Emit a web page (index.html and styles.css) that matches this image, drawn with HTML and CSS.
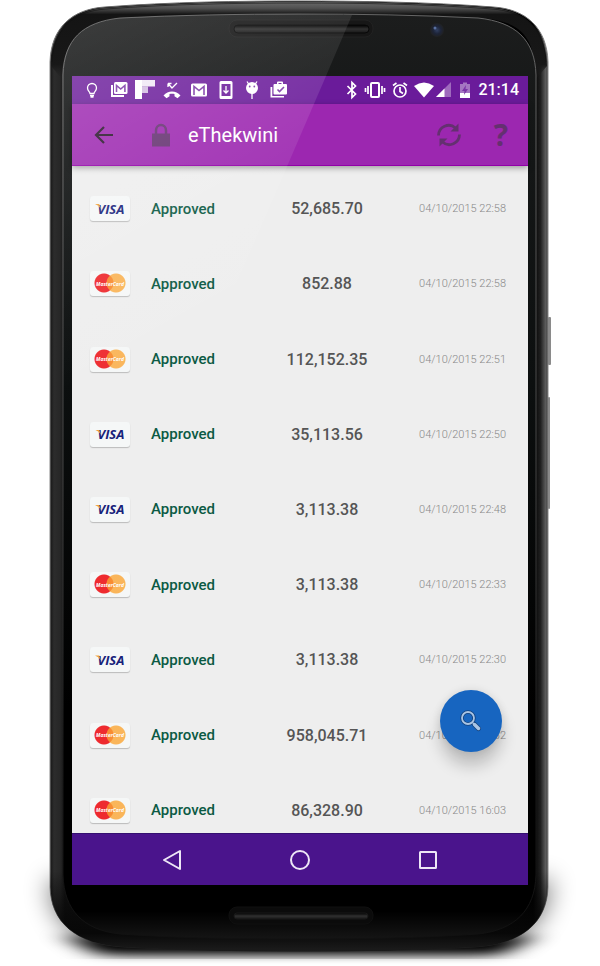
FILE: index.html
```html
<!DOCTYPE html>
<html lang="en">
<head>
<meta charset="utf-8">
<meta name="viewport" content="width=device-width, initial-scale=1">
<title>eThekwini</title>
<link rel="stylesheet" href="styles.css">
</head>
<body>
<main class="stage">
  <svg class="frame" viewBox="0 0 600 966" preserveAspectRatio="none" aria-hidden="true">
    <defs>
      <linearGradient id="rim" x1="0" x2="1" y1="0" y2="0">
        <stop offset="0" stop-color="#151515"/><stop offset=".008" stop-color="#2c2c2c"/><stop offset=".02" stop-color="#272727"/>
        <stop offset=".03" stop-color="#151515"/><stop offset=".97" stop-color="#000"/><stop offset=".985" stop-color="#202020"/><stop offset=".995" stop-color="#5a5a5a"/><stop offset="1" stop-color="#444"/>
      </linearGradient>
      <linearGradient id="shade" x1="0" x2="0" y1="0" y2="1">
        <stop offset="0" stop-color="#000" stop-opacity="0"/><stop offset=".91" stop-color="#000" stop-opacity="0"/><stop offset=".98" stop-color="#080808"/><stop offset="1" stop-color="#1c1c1c"/>
      </linearGradient>
      <linearGradient id="top" x1="0" x2="0" y1="0" y2="1">
        <stop offset="0" stop-color="#6a6a6a"/><stop offset=".08" stop-color="#505050"/><stop offset=".16" stop-color="#141414"/><stop offset=".8" stop-color="#181818"/><stop offset="1" stop-color="#222" stop-opacity="0"/>
      </linearGradient>
      <linearGradient id="glass" x1="0" x2="0" y1="0" y2="1">
        <stop offset="0" stop-color="#1c1d1d"/><stop offset=".1" stop-color="#161818"/><stop offset=".4" stop-color="#0c0f0f"/><stop offset=".75" stop-color="#000"/><stop offset=".97" stop-color="#000"/><stop offset="1" stop-color="#151515"/>
      </linearGradient>
      <linearGradient id="edge" x1="0" x2="0" y1="0" y2="1">
        <stop offset="0" stop-color="#666"/><stop offset=".06" stop-color="#888"/><stop offset=".93" stop-color="#888"/><stop offset=".98" stop-color="#444"/><stop offset="1" stop-color="#181818"/>
      </linearGradient>
      <linearGradient id="line" x1="0" x2="0" y1="0" y2="1">
        <stop offset="0" stop-color="#666"/><stop offset=".5" stop-color="#444"/><stop offset=".8" stop-color="#1a1a1a"/><stop offset="1" stop-color="#111"/>
      </linearGradient>
      <linearGradient id="slot" x1="0" x2="0" y1="0" y2="1">
        <stop offset="0" stop-color="#000"/><stop offset=".5" stop-color="#303030"/><stop offset="1" stop-color="#181818"/>
      </linearGradient>
      <radialGradient id="lens"><stop offset="0" stop-color="#314062"/><stop offset=".55" stop-color="#1d2438"/><stop offset="1" stop-color="#202122"/></radialGradient>
      <filter id="blur" x="-20%" y="-100%" width="140%" height="300%"><feGaussianBlur stdDeviation="14 5"/></filter>
      <filter id="haze" x="-20%" y="-50%" width="140%" height="200%"><feGaussianBlur stdDeviation="12"/></filter>
      <clipPath id="ground"><rect width="600" height="959"/></clipPath>
      <linearGradient id="gloss" gradientUnits="userSpaceOnUse" x1="50" y1="0" x2="200" y2="330">
        <stop offset="0" stop-color="#fff" stop-opacity=".2"/><stop offset="1" stop-color="#fff" stop-opacity="0"/>
      </linearGradient>
    </defs>
    <path d="M48 880C50 940 100 951 140 953H460C500 951 548 940 552 880z" fill="#000" opacity=".5" filter="url(#haze)" clip-path="url(#ground)"/>
    <path d="M66 936H534L500 954H100z" fill="#000" filter="url(#blur)"/>
    <rect x="548" y="317" width="3" height="48" rx="1" fill="#8a8a8a"/>
    <rect x="548" y="397" width="2" height="112" rx="1" fill="#8a8a8a"/>
    <path id="body" d="M50 62C51 28 72 9 105 7C170 2 240 1 299 1S428 2 493 7C526 9 547 28 548 62V887C547 921 524 944 474 947C420 950 360 951 299 951S178 950 124 947C74 944 51 921 50 887z" fill="url(#rim)" stroke="url(#edge)"/>
    <path d="M50 62V887C51 921 74 944 124 947C178 950 240 951 299 951S420 950 474 947C524 944 547 921 548 887V62z" fill="url(#shade)"/>
    <path d="M51 66C52 29 73 10 106 8C170 3 240 2 299 2S428 3 492 8C525 10 546 29 547 66L535 80C536 40 524 20 478 18C420 15 360 14 299 14S178 15 120 18C75 20 64 42 63 80z" fill="url(#top)"/>
    <path d="M52 62C53 29 74 11 106 9C170 4 240 3 299 3S428 4 492 9C524 11 545 29 546 62" fill="none" stroke="#111" opacity=".6"/>
    <path d="M63 75C64 40 82 22 120 18C178 15 240 14 299 14S420 15 478 18C516 22 535 40 536 75V875C535 910 515 930 478 934C420 938 360 939 299 939S178 938 120 934C83 930 64 910 63 875z" fill="url(#glass)" stroke="url(#line)"/>
    <g stroke="#222">
      <rect x="229" y="20" width="144" height="17" rx="8" fill="#171717"/>
      <rect x="234" y="25" width="135" height="8" rx="4" fill="url(#slot)" stroke="#080808"/>
      <rect x="229" y="907" width="144" height="17" rx="8" fill="#0b0b0b" stroke="#101010"/>
      <rect x="234" y="913" width="134" height="6" rx="3" fill="url(#slot)" stroke="#181818"/>
    </g>
    <circle cx="437" cy="30" r="7" fill="url(#lens)"/>
    <circle cx="435" cy="28" r="1.500" fill="#5970a0"/>
    <path d="M62 75C64 40 82 22 120 18C178 15 240 14 299 14L352 15L326 76H72V600H63z" fill="url(#gloss)" opacity=".75"/>
  </svg>

  <div class="screen">
    <div class="status">
      <div class="notices">
        <svg viewBox="0 0 20 20"><path d="M8 13.500c0-1.500-2.500-2.500-2.500-5.500a4.500 4.500 0 0 1 9 0c0 3-2.500 4-2.500 5.500z" class="ln"/><path d="M8 15.500h4M8.500 17h3" class="ln"/></svg>
        <svg viewBox="0 0 20 20"><path d="M2 5v12h13v-2H4V5z"/><rect x="5" y="2" width="13.500" height="12" rx="1.500"/><path d="M7.500 12V5.500l4.200 3.500 4.200-3.500V12" class="cut"/></svg>
        <svg viewBox="0 0 20 20"><path d="M0 0h7v19H0z"/><path d="M7 0h13v6.500H7z" opacity=".9"/><path d="M7 6.500h6V13H7z" opacity=".7"/></svg>
        <svg viewBox="0 0 20 20"><path d="M1.500 15.500c4.500-5.500 12.500-5.500 17 0l-3 2.800-3-2v-2.200c-2-.5-3-.5-5 0v2.200l-3 2z"/><path d="M6 3.500V7M6 3.500h3.500M6 3.500L10 8l5-5" class="ln"/></svg>
        <svg viewBox="0 0 20 20"><rect x="2" y="3.500" width="16" height="13" rx="1.500"/><path d="M5 15V6.500l5 4 5-4V15" class="cut"/></svg>
        <svg viewBox="0 0 20 20"><path fill-rule="evenodd" d="M5 1h10q1.500 0 1.500 1.500v15q0 1.500-1.500 1.500H5q-1.500 0-1.500-1.500v-15Q3.500 1 5 1zm.5 3v12h9V4z"/><path d="M10 6v7M7.500 10.500L10 13l2.500-2.500" class="ln"/></svg>
        <svg viewBox="0 0 20 20"><circle cx="10" cy="8" r="6"/><path d="M5 1.500l2 3M15 1.500l-2 3M10 12v7" class="ln"/><circle cx="7.700" cy="6.500" r=".9" class="hole"/><circle cx="12.300" cy="6.500" r=".9" class="hole"/></svg>
        <svg viewBox="0 0 20 20"><path d="M1.500 7v10.500H15V16H3.300V7z"/><path fill-rule="evenodd" d="M4.500 5q0-1 1-1H8V2.500Q8 1.500 9 1.500h4q1 0 1 1V4h3q1 0 1 1v8.500q0 1-1 1H5.500q-1 0-1-1zM9.500 3v1h3V3z"/><path d="M8.500 9.500l2 2L15 7" class="cut"/></svg>
      </div>
      <div class="system">
        <svg class="w12" viewBox="0 0 12 20"><path d="M1.500 6l8 8-3.500 3.500v-15L9.500 6l-8 8" class="ln bold"/></svg>
        <svg class="w22" viewBox="0 0 22 20"><rect x="7" y="3" width="8" height="14" rx="1" class="ln heavy"/><path d="M4 6v8M1.500 8v4M18 6v8M20.500 8v4" class="ln bold"/></svg>
        <svg class="w16" viewBox="0 0 16 20"><circle cx="8" cy="11" r="6" class="ln bold"/><path d="M8 7v4.500l3 2M1 5.500L4.500 3M15 5.500L11.500 3" class="ln bold"/></svg>
        <svg class="w38" viewBox="0 0 38 20"><path d="M0 6q10-7 20 0L10 17.500z"/><path d="M37 2v15H22z" opacity=".35"/><path d="M30.500 8.500V17H22z"/></svg>
        <svg class="w14" viewBox="0 0 14 20"><path d="M2 4h3V2.500h4V4h3v14H2z" opacity=".4"/><path d="M2 13h10v5H2z"/><path d="M8 5l-4 6h2.500L6 15l4-6H7.500z" class="hole"/></svg>
        <time>21:14</time>
      </div>
    </div>

    <header class="appbar">
      <button class="tool" aria-label="Back"><svg viewBox="0 0 24 24"><path d="M21 12H4.500M12 4l-8 8 8 8" fill="none" stroke="#271429" stroke-width="2.200"/></svg></button>
      <svg class="lock" viewBox="0 0 24 24"><path d="M7 12V7.500a5 5.500 0 0 1 10 0V12" fill="none" stroke="#643070" stroke-width="2.500"/><rect x="3" y="10.500" width="18" height="13" fill="#643070"/></svg>
      <h1>eThekwini</h1>
      <button class="tool refresh" aria-label="Refresh"><svg viewBox="0 0 24 24"><path d="M1.500 12.500A10.200 10.200 0 0 1 18.500 5M22.500 11.500A10.200 10.200 0 0 1 5.500 19" fill="none" stroke="#643070" stroke-width="2.800"/><path d="M21.500.5v8h-8zM2.500 23.500v-8h8z" fill="#643070"/></svg></button>
      <button class="tool help" aria-label="Help">?</button>
    </header>

    <section class="list">
      <table>
        <tbody>
          <tr><td class="card"><span class="badge visa">VISA</span></td><td class="state">Approved</td><td class="sum">52,685.70</td><td class="date">04/10/2015 22:58</td></tr>
          <tr><td class="card"><span class="badge mc">MasterCard</span></td><td class="state">Approved</td><td class="sum">852.88</td><td class="date">04/10/2015 22:58</td></tr>
          <tr><td class="card"><span class="badge mc">MasterCard</span></td><td class="state">Approved</td><td class="sum">112,152.35</td><td class="date">04/10/2015 22:51</td></tr>
          <tr><td class="card"><span class="badge visa">VISA</span></td><td class="state">Approved</td><td class="sum">35,113.56</td><td class="date">04/10/2015 22:50</td></tr>
          <tr><td class="card"><span class="badge visa">VISA</span></td><td class="state">Approved</td><td class="sum">3,113.38</td><td class="date">04/10/2015 22:48</td></tr>
          <tr><td class="card"><span class="badge mc">MasterCard</span></td><td class="state">Approved</td><td class="sum">3,113.38</td><td class="date">04/10/2015 22:33</td></tr>
          <tr><td class="card"><span class="badge visa">VISA</span></td><td class="state">Approved</td><td class="sum">3,113.38</td><td class="date">04/10/2015 22:30</td></tr>
          <tr><td class="card"><span class="badge mc">MasterCard</span></td><td class="state">Approved</td><td class="sum">958,045.71</td><td class="date">04/10/2015 16:32</td></tr>
          <tr><td class="card"><span class="badge mc">MasterCard</span></td><td class="state">Approved</td><td class="sum">86,328.90</td><td class="date">04/10/2015 16:03</td></tr>
        </tbody>
      </table>
    </section>

    <nav class="nav">
      <button aria-label="Back"><svg viewBox="0 0 24 24"><path d="M20 3v18L4 12z"/></svg></button>
      <button aria-label="Home"><svg viewBox="0 0 24 24"><circle cx="12" cy="12" r="9"/></svg></button>
      <button aria-label="Recent apps"><svg viewBox="0 0 24 24"><rect x="4" y="4" width="16" height="16" rx=".5"/></svg></button>
    </nav>

    <button class="fab" aria-label="Search"><svg viewBox="0 0 24 24"><path d="M13 13l3 3" stroke="#0c4384" stroke-width="3"/><circle cx="9" cy="9" r="6" fill="none" stroke="#12417c" stroke-width="3.500"/><circle cx="9" cy="9" r="6" fill="none" stroke="#a9c4e4" stroke-width="1.800"/><path d="M15.500 15.500l4 4" stroke="#12417c" stroke-width="5" stroke-linecap="round"/><path d="M13 13l2 2" stroke="#a9c4e4" stroke-width="1.500"/><path d="M15.500 15.500l4 4" stroke="#a9c4e4" stroke-width="3.500" stroke-linecap="round"/></svg></button>

    <svg class="sheen" viewBox="0 0 456 810" preserveAspectRatio="none" aria-hidden="true"><path d="M0 0H254L0 590z" fill="url(#sheen)"/><defs><linearGradient id="sheen" gradientUnits="userSpaceOnUse" x1="0" y1="0" x2="150" y2="270"><stop offset="0" stop-color="#fff" stop-opacity=".19"/><stop offset="1" stop-color="#fff" stop-opacity="0"/></linearGradient></defs></svg>
  </div>
</main>
</body>
</html>
```
FILE: styles.css
```css
* { box-sizing: border-box; }

body {
  margin: 0;
  background: #fff;
  font-family: Roboto, "Liberation Sans", sans-serif;
}

button {
  padding: 0;
  border: 0;
  background: none;
  cursor: pointer;
}

svg { display: block; }

.stage {
  position: relative;
  padding: 76px 12% 81px;
}

.frame {
  position: absolute;
  inset: 0;
  width: 100%;
  height: 100%;
}

.screen {
  position: relative;
  background: #eee;
}

.status {
  display: flex;
  align-items: center;
  justify-content: space-between;
  height: 28px;
  padding: 0 9px 0 10px;
  background: #6a1b9a;
  color: #fff;
}

.notices {
  display: flex;
  justify-content: space-between;
  width: 207px;
}

.system {
  display: flex;
  align-items: center;
  gap: 6px;
}

.status svg {
  width: 20px;
  height: 20px;
  fill: #fff;
}

.status .w12 { width: 12px; }
.status .w14 { width: 14px; }
.status .w16 { width: 16px; }
.status .w22 { width: 22px; }
.status .w38 { width: 38px; }

.status .ln {
  fill: none;
  stroke: #fff;
  stroke-width: 1.3;
}

.status .bold { stroke-width: 1.7; }
.status .heavy { stroke-width: 2; }

.status .cut {
  fill: none;
  stroke: #7a35a6;
  stroke-width: 1.6;
}

.status .hole { fill: #7a35a6; }

time {
  font-size: 16px;
  font-weight: 500;
  line-height: 20px;
}

.appbar {
  position: relative;
  display: flex;
  align-items: center;
  height: 62px;
  padding: 0 15px 0 20px;
  background: #9c27b0;
  border-bottom: 1px solid #9200a8;
  box-shadow: 0 2px 6px rgba(0, 0, 0, .35);
}

.tool {
  width: 24px;
  height: 24px;
}

.lock {
  width: 24px;
  height: 24px;
  margin-left: 33px;
}

.appbar h1 {
  flex: 1;
  margin: 0 0 0 15px;
  color: #fff;
  font-size: 20px;
  font-weight: 400;
  line-height: 24px;
}

.refresh { margin-right: 28px; }

.help {
  color: #643070;
  font: 700 30px/24px "Open Sans", sans-serif;
}

.list {
  height: 667px;
  padding-top: 5px;
  overflow: hidden;
}

table {
  width: 100%;
  height: 677px;
  table-layout: fixed;
  border-collapse: collapse;
}

td { padding: 0; }

.card {
  width: 79px;
  padding-left: 18px;
}

.badge {
  display: flex;
  align-items: center;
  justify-content: center;
  position: relative;
  width: 40px;
  height: 25px;
  border-radius: 3px;
  background: #f5f7f7;
  box-shadow: 0 1px 1px #bbb;
  white-space: nowrap;
}

.visa {
  padding-left: 2px;
  color: #17227a;
  font: italic 700 13px/24px "Open Sans", sans-serif;
}

/* Orange wing on the V */
.visa::before {
  content: "";
  position: absolute;
  left: 5px;
  top: 8px;
  width: 6px;
  height: 5px;
  background: #f2a33a;
  clip-path: polygon(0 0, 70% 0, 100% 100%, 60% 40%);
}

.mc {
  background:
    radial-gradient(circle at 26px 12px, #fba533cc 9px, transparent 10px),
    radial-gradient(circle at 14px 12px, #ee2b2f 9px, transparent 10px),
    #f5f7f7;
  color: #fff;
  font: italic 700 5px/24px "Open Sans", sans-serif;
}

.state {
  width: 100px;
  color: #0b5a44;
  font-size: 15px;
  font-weight: 500;
}

.sum {
  color: #555;
  font-size: 16px;
  font-weight: 500;
  text-align: center;
}

.date {
  width: 125px;
  padding-right: 22px;
  color: #888;
  font-size: 11px;
  font-weight: 300;
  text-align: right;
}

.nav {
  display: flex;
  align-items: center;
  justify-content: center;
  gap: 104px;
  height: 52px;
  background: #4a148c;
  border-top: 1px solid #351070;
}

.nav svg {
  width: 24px;
  height: 24px;
  fill: none;
  stroke: #ede7f6;
  stroke-width: 2;
  stroke-linejoin: round;
}

.fab {
  position: absolute;
  right: 26px;
  bottom: 133px;
  display: grid;
  place-items: center;
  width: 62px;
  height: 62px;
  border-radius: 50%;
  background: #1765c0;
  box-shadow: 0 14px 16px rgba(0, 0, 0, .2), 0 0 8px rgba(0, 0, 0, .1);
}

.fab svg {
  width: 24px;
  height: 24px;
}

.sheen {
  position: absolute;
  inset: 0;
  width: 100%;
  height: 100%;
  pointer-events: none;
}
```
